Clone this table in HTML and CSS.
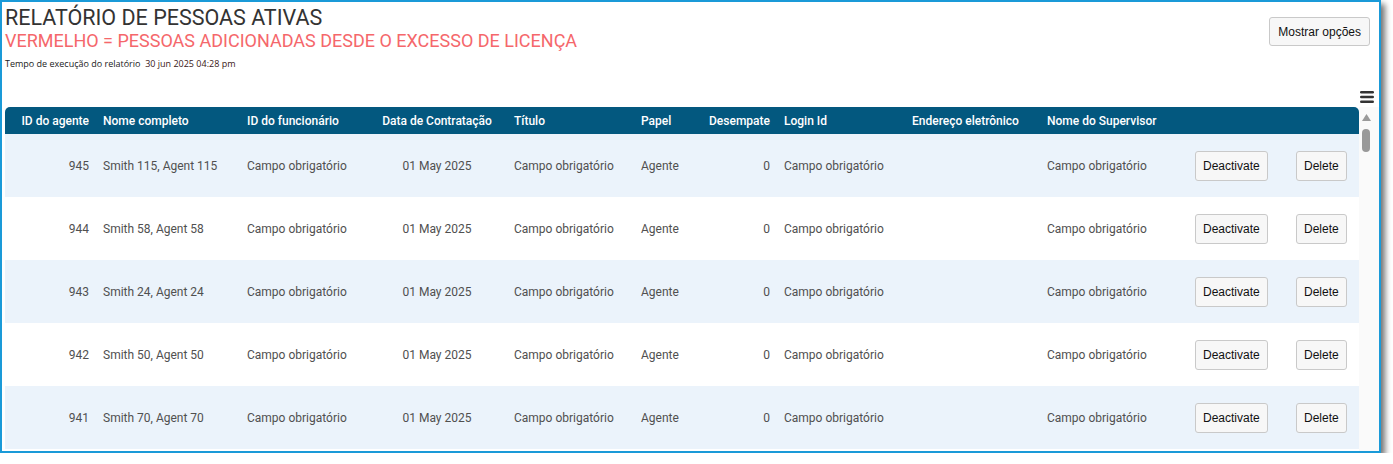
FILE: index.html
```html
<!DOCTYPE html>
<html lang="pt">
<head>
<meta charset="utf-8">
<title>Relatório de pessoas ativas</title>
<link rel="stylesheet" href="styles.css">
</head>
<body>
<div class="frame">
  <div class="head">
    <div class="titles">
      <h1 class="title">RELATÓRIO DE PESSOAS ATIVAS</h1>
      <h2 class="subtitle">VERMELHO = PESSOAS ADICIONADAS DESDE O EXCESSO DE LICENÇA</h2>
      <p class="runtime">Tempo de execução do relatório&nbsp; <span class="runtime-date">30 jun 2025 04:28 pm</span></p>
    </div>
    <button class="btn btn-options">Mostrar opções</button>
  </div>
  <div class="tools">
    <svg class="menu-icon" width="14" height="12" viewBox="0 0 14 12"><rect x="0" y="0" width="14" height="2.6" rx="1.3" fill="#333"/><rect x="0" y="4.7" width="14" height="2.6" rx="1.3" fill="#333"/><rect x="0" y="9.4" width="14" height="2.6" rx="1.3" fill="#333"/></svg>
  </div>
  <div class="grid-area">
    <table class="report">
      <colgroup>
        <col class="c-id"><col class="c-name"><col class="c-emp"><col class="c-date"><col class="c-title"><col class="c-role"><col class="c-tie"><col class="c-login"><col class="c-mail"><col class="c-sup"><col class="c-deact"><col class="c-del">
      </colgroup>
      <thead>
        <tr>
          <th class="num">ID do agente</th>
          <th>Nome completo</th>
          <th>ID do funcionário</th>
          <th class="center date">Data de Contratação</th>
          <th>Título</th>
          <th>Papel</th>
          <th class="num">Desempate</th>
          <th>Login Id</th>
          <th>Endereço eletrônico</th>
          <th>Nome do Supervisor</th>
          <th></th>
          <th class="last"></th>
        </tr>
      </thead>
      <tbody>
        <tr class="band">
          <td class="num">945</td><td>Smith 115, Agent 115</td><td>Campo obrigatório</td><td class="center date">01 May 2025</td><td>Campo obrigatório</td><td>Agente</td><td class="num">0</td><td>Campo obrigatório</td><td></td><td>Campo obrigatório</td><td><button class="btn">Deactivate</button></td><td><button class="btn">Delete</button></td>
        </tr>
        <tr>
          <td class="num">944</td><td>Smith 58, Agent 58</td><td>Campo obrigatório</td><td class="center date">01 May 2025</td><td>Campo obrigatório</td><td>Agente</td><td class="num">0</td><td>Campo obrigatório</td><td></td><td>Campo obrigatório</td><td><button class="btn">Deactivate</button></td><td><button class="btn">Delete</button></td>
        </tr>
        <tr class="band">
          <td class="num">943</td><td>Smith 24, Agent 24</td><td>Campo obrigatório</td><td class="center date">01 May 2025</td><td>Campo obrigatório</td><td>Agente</td><td class="num">0</td><td>Campo obrigatório</td><td></td><td>Campo obrigatório</td><td><button class="btn">Deactivate</button></td><td><button class="btn">Delete</button></td>
        </tr>
        <tr>
          <td class="num">942</td><td>Smith 50, Agent 50</td><td>Campo obrigatório</td><td class="center date">01 May 2025</td><td>Campo obrigatório</td><td>Agente</td><td class="num">0</td><td>Campo obrigatório</td><td></td><td>Campo obrigatório</td><td><button class="btn">Deactivate</button></td><td><button class="btn">Delete</button></td>
        </tr>
        <tr class="band">
          <td class="num">941</td><td>Smith 70, Agent 70</td><td>Campo obrigatório</td><td class="center date">01 May 2025</td><td>Campo obrigatório</td><td>Agente</td><td class="num">0</td><td>Campo obrigatório</td><td></td><td>Campo obrigatório</td><td><button class="btn">Deactivate</button></td><td><button class="btn">Delete</button></td>
        </tr>
      </tbody>
    </table>
    <div class="scroll">
      <svg class="scroll-up" width="9" height="7" viewBox="0 0 9 7"><path d="M4.5 0 L9 7 L0 7 Z" fill="#9a9a9a"/></svg>
      <div class="scroll-thumb"></div>
    </div>
  </div>
</div>
</body>
</html>
```

FILE: styles.css
```css
* { box-sizing: border-box; }

html, body {
  margin: 0;
  padding: 0;
  background: #ffffff;
}

body {
  font-family: Roboto, "Liberation Sans", Arial, sans-serif;
}

.frame {
  width: 1381px;
  height: 453px;
  border: 2px solid #1a9ad8;
  background: #ffffff;
  box-shadow: 4px 4px 6px rgba(0, 0, 0, 0.55);
  overflow: hidden;
  display: flex;
  flex-direction: column;
}

.head {
  height: 82px;
  display: flex;
  justify-content: space-between;
  align-items: flex-start;
  padding: 3px 9px 0 3px;
}

.titles {
  display: flex;
  flex-direction: column;
}

.title {
  margin: 0;
  font-family: Roboto, sans-serif;
  font-weight: 400;
  font-size: 21.5px;
  line-height: 25px;
  color: #333333;
}

.subtitle {
  margin: 0;
  font-family: Roboto, sans-serif;
  font-weight: 400;
  font-size: 18px;
  line-height: 22px;
  color: #f5676b;
}

.runtime {
  margin: 6px 0 0 0;
  font-family: "Open Sans", Roboto, sans-serif;
  font-size: 9px;
  line-height: 12px;
  color: #222222;
}

.runtime-date {
  color: #3a1616;
}

.btn {
  font-family: "Liberation Sans", Arial, sans-serif;
  font-size: 12px;
  color: #111111;
  background: #f7f7f7;
  border: 1px solid #c9c9c9;
  border-radius: 3px;
  height: 30px;
  padding: 0 7px;
  cursor: pointer;
}

.btn-options {
  margin-top: 12px;
  height: 29px;
  font-size: 12px;
  padding: 0 8px;
}

.tools {
  height: 23px;
  display: flex;
  justify-content: flex-end;
  align-items: center;
  padding-right: 5px;
}

.menu-icon {
  display: block;
  margin-top: 2px;
}

.grid-area {
  display: flex;
  align-items: stretch;
  padding-left: 3px;
  flex: 1;
}

.report {
  width: 1354px;
  table-layout: fixed;
  border-collapse: collapse;
  border-spacing: 0;
  align-self: flex-start;
}

.c-id { width: 91px; }
.c-name { width: 144px; }
.c-emp { width: 135px; }
.c-date { width: 132px; }
.c-title { width: 127px; }
.c-role { width: 68px; }
.c-tie { width: 75px; }
.c-login { width: 128px; }
.c-mail { width: 135px; }
.c-sup { width: 148px; }
.c-deact { width: 101px; }
.c-del { width: 70px; }

.report th {
  height: 27px;
  background: #03587f;
  color: #ffffff;
  font-family: Roboto, sans-serif;
  font-weight: 500;
  font-size: 12px;
  text-align: left;
  padding: 0 7px;
  white-space: nowrap;
}

.report th:first-child { border-top-left-radius: 5px; }
.report th.last { border-top-right-radius: 5px; }

.report td {
  height: 63px;
  font-family: Roboto, sans-serif;
  font-size: 12px;
  color: #505050;
  padding: 1px 7px 0 7px;
  white-space: nowrap;
}

.report tr.band td { background: #ebf3fb; }

.report .num { text-align: right; }
.report .center { text-align: center; }
.report .date { padding-right: 15px; }

.scroll {
  width: 20px;
  background: #fafafa;
  display: flex;
  flex-direction: column;
  align-items: flex-start;
  padding-left: 3px;
}

.scroll-up {
  display: block;
  margin-top: 7px;
}

.scroll-thumb {
  margin-top: 8px;
  width: 8px;
  height: 23px;
  border-radius: 4px;
  background: #999999;
}
```
